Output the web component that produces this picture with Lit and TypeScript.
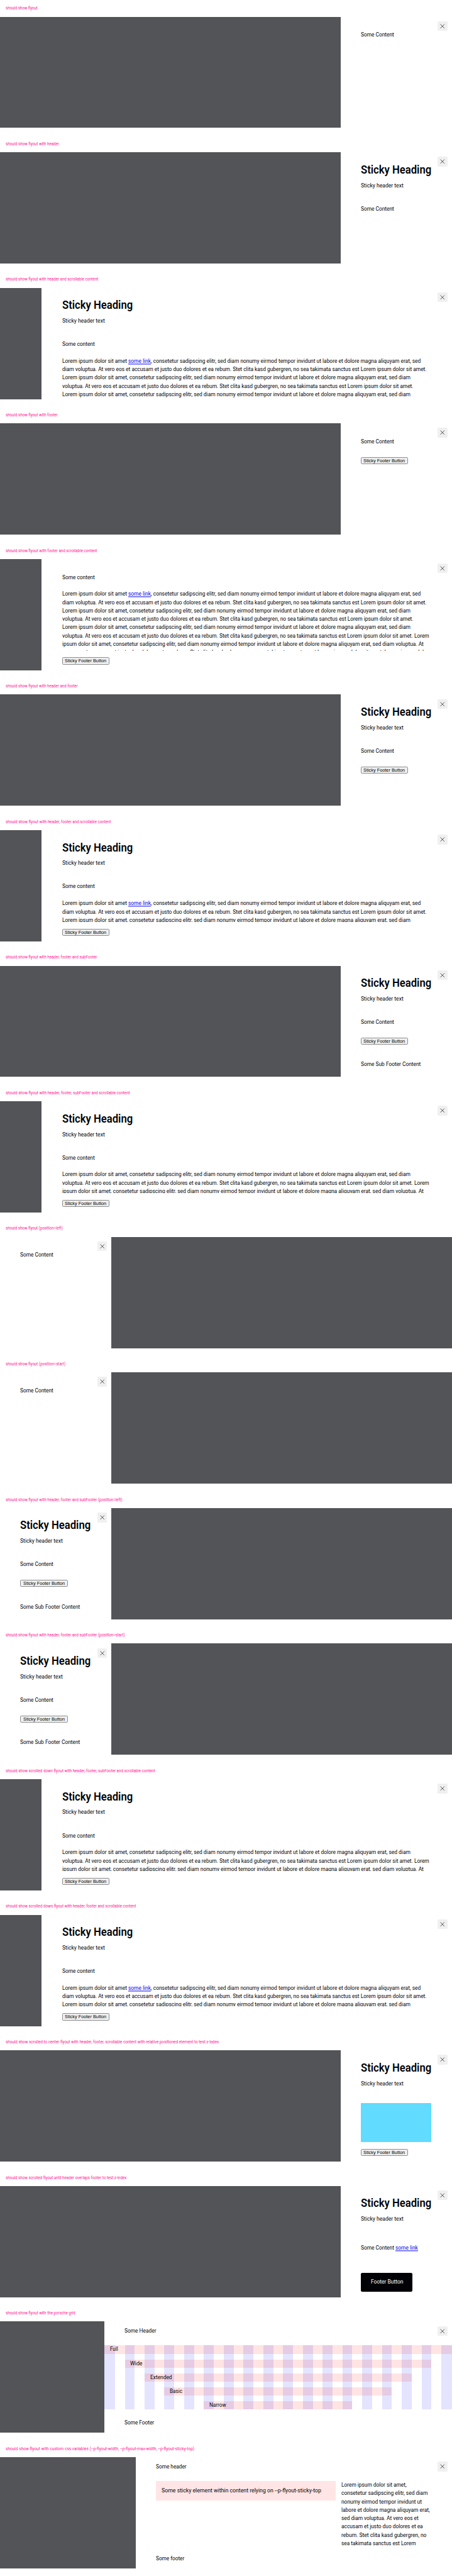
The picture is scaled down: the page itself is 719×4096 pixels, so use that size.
import { LitElement, html, css, svg, type TemplateResult } from "lit";
import { customElement, property } from "lit/decorators.js";

/* One design pixel, in CSS pixels. */
const UNIT = 0.55277;

/* A single line of text, condensed horizontally to a given width in design pixels. */
@customElement("fit-line")
class FitLine extends LitElement {
  @property({ type: Number }) w = 0;

  static styles = css`
    :host { display: block; width: 0; white-space: nowrap; }
    .text { display: inline-block; transform-origin: 0 50%; }
  `;

  render() {
    return html`<span class="text"><slot></slot></span>`;
  }

  firstUpdated() {
    this.fit();
    requestAnimationFrame(() => this.fit());
  }

  private fit() {
    const el = this.renderRoot.querySelector(".text") as HTMLElement;
    el.style.transform = "none";
    const natural = el.getBoundingClientRect().width;
    if (natural > 0 && this.w > 0) {
      el.style.transform = `translateY(0.4px) scaleX(${(this.w * UNIT) / natural})`;
    }
  }
}

type Line = [TemplateResult | string, number];

const LOREM = "consetetur sadipscing elitr, sed diam nonumy eirmod tempor invidunt ut labore et dolore magna aliquyam erat, sed";
const VERO = "vero eos et accusam et justo duo dolores et ea rebum. Stet clita kasd gubergren, no sea takimata sanctus est Lorem ipsum dolor sit amet.";

const lineLink: Line = [html`Lorem ipsum dolor sit amet <a class="link">some link</a>, ${LOREM}`, 1031.5];
const lineDiam: Line = ["diam voluptua. At " + VERO, 1048.5];
const lineLorem: Line = ["Lorem ipsum dolor sit amet, " + LOREM + " diam", 1002];
const lineVoluptua: Line = ["voluptua. At " + VERO, 1010.5];
const lineVoluptuaLorem: Line = ["voluptua. At " + VERO + " Lorem", 1056];
const lineIpsum: Line = ["ipsum dolor sit amet, " + LOREM + " diam voluptua. At", 1040];
const lineVero: Line = [VERO + " Lorem ipsum dolor", 1054];

const linked = [lineLink, lineDiam, lineLorem, lineVoluptua, lineLorem, lineVoluptuaLorem, lineIpsum, lineVero];
const plain = [lineLorem, lineVoluptuaLorem, lineIpsum];

interface Story {
  title: string;
  titleWidth: number;
  layout: string;
  body: TemplateResult;
}

const closeButton = html`<button class="close" aria-label="Close">
  <svg class="icon" viewBox="0 0 28 28">${svg`<path d="M8.3 8.3 19.7 19.7M19.7 8.3 8.3 19.7" fill="none" stroke="#010205" stroke-width="1.2"/>`}</svg>
</button>`;

const header = html`<header class="header">
  <h2 class="heading"><fit-line w="203">Sticky Heading</fit-line></h2>
  <fit-line w="122.5">Sticky header text</fit-line>
</header>`;

const footer = html`<footer class="footer"><button class="native"><fit-line class="caption" w="119.7">Sticky Footer Button</fit-line></button></footer>`;

const content = html`<div class="content"><fit-line w="95.5">Some Content</fit-line></div>`;

const subFooter = html`<div class="sub"><fit-line w="172.5">Some Sub Footer Content</fit-line></div>`;

const scroll = (lines: Line[]) => html`<div class="content scroll">
  <fit-line w="93.5">Some content</fit-line>
  <div class="para">${lines.map(([t, w]) => html`<fit-line .w=${w}>${t}</fit-line>`)}</div>
</div>`;

const bars: [string, string, number][] = [
  ["full", "Full", 23],
  ["wide", "Wide", 35.3],
  ["extended", "Extended", 62.5],
  ["basic", "Basic", 36.3],
  ["narrow", "Narrow", 48.3],
];

const gridContent = html`<div class="grid">
  ${Array.from({ length: 18 }, (_, i) => html`<i class="col" style="grid-column:${i + 1}"></i>`)}
  ${bars.map(([cls, name, w]) => html`<div class="bar ${cls}"><fit-line .w=${w}>${name}</fit-line></div>`)}
</div>`;

const column: Line[] = [
  ["Lorem ipsum dolor sit amet,", 187.5],
  ["consetetur sadipscing elitr, sed diam", 248.5],
  ["nonumy eirmod tempor invidunt ut", 231.5],
  ["labore et dolore magna aliquyam erat,", 254.5],
  ["sed diam voluptua. At vero eos et", 222],
  ["accusam et justo duo dolores et ea", 234.5],
  ["rebum. Stet clita kasd gubergren, no", 245],
  ["sea takimata sanctus est Lorem", 214.5],
];

const full = html`${header}${content}${footer}${subFooter}`;

const stories: Story[] = [
  { title: "should show flyout", titleWidth: 92, layout: "end", body: content },
  { title: "should show flyout with header", titleWidth: 153.5, layout: "end", body: html`${header}${content}` },
  { title: "should show flyout with header and scrollable content", titleWidth: 266.5, layout: "broad", body: html`${header}${scroll(linked.slice(0, 5))}` },
  { title: "should show flyout with footer", titleWidth: 149.5, layout: "end", body: html`${content}${footer}` },
  { title: "should show flyout with footer and scrollable content", titleWidth: 263, layout: "broad", body: html`${scroll(linked)}${footer}` },
  { title: "should show flyout with header and footer", titleWidth: 207.5, layout: "end", body: html`${header}${content}${footer}` },
  { title: "should show flyout with header, footer and scrollable content", titleWidth: 303, layout: "broad", body: html`${header}${scroll(linked.slice(0, 3))}${footer}` },
  { title: "should show flyout with header, footer and subFooter", titleWidth: 263, layout: "end", body: full },
  { title: "should show flyout with header, footer, subFooter and scrollable content", titleWidth: 357.5, layout: "broad", body: html`${header}${scroll(plain)}${footer}` },
  { title: "should show flyout (position=left)", titleWidth: 164.5, layout: "start", body: content },
  { title: "should show flyout (position=start)", titleWidth: 172, layout: "start", body: content },
  { title: "should show flyout with header, footer and subFooter (position=left)", titleWidth: 336, layout: "start", body: full },
  { title: "should show flyout with header, footer and subFooter (position=start)", titleWidth: 343, layout: "start", body: full },
  { title: "should show scrolled down flyout with header, footer, subFooter and scrollable content", titleWidth: 430, layout: "broad", body: html`${header}${scroll(plain)}${footer}` },
  { title: "should show scrolled down flyout with header, footer and scrollable content", titleWidth: 375.5, layout: "broad", body: html`${header}${scroll(linked.slice(0, 3))}${footer}` },
  {
    title: "should show scrolled to center flyout with header, footer, scrollable content with relative positioned element to test z-index",
    titleWidth: 613.5, layout: "end",
    body: html`${header}<div class="content scroll blue"></div>${footer}`,
  },
  {
    title: "should show scrolled flyout until header overlaps footer to test z-index",
    titleWidth: 348, layout: "end",
    body: html`${header}
      <div class="content shifted"><fit-line w="164.3">Some Content <a class="link">some link</a></fit-line></div>
      <footer class="footer push"><button class="solid"><fit-line w="93">Footer Button</fit-line></button></footer>`,
  },
  {
    title: "should show flyout with the porsche grid", titleWidth: 200.5, layout: "gridded",
    body: html`<header class="slim"><fit-line w="91.3">Some Header</fit-line></header>
      ${gridContent}
      <footer class="line-footer"><fit-line w="85.3">Some Footer</fit-line></footer>`,
  },
  {
    title: "should show flyout with custom css variables (--p-flyout-width, --p-flyout-max-width, --p-flyout-sticky-top)",
    titleWidth: 543, layout: "custom",
    body: html`<header class="slim"><fit-line w="88">Some header</fit-line></header>
      <div class="split">
        <div class="sticky"><fit-line w="459.5">Some sticky element within content relying on --p-flyout-sticky-top</fit-line></div>
        <div>${column.map(([t, w]) => html`<fit-line .w=${w}>${t}</fit-line>`)}</div>
      </div>
      <footer class="line-footer"><fit-line w="81.8">Some footer</fit-line></footer>`,
  },
];

@customElement("app-root")
class AppRoot extends LitElement {
  static styles = css`
    :host {
      --u: 0.55277px;
      display: block;
      width: 719px;
      height: 4096px;
      overflow: hidden;
      background: #fff;
      color: #010205;
      font: 400 calc(16 * var(--u)) / calc(24 * var(--u)) Roboto, "Liberation Sans", sans-serif;
    }
    * { box-sizing: border-box; margin: 0; }
    .story { height: calc(390 * var(--u)); }
    .title {
      height: calc(48 * var(--u));
      padding: calc(13.2 * var(--u)) 0 0 calc(16 * var(--u));
      font-size: calc(12 * var(--u));
      font-weight: 400;
      color: #ff1493;
    }
    .stage { display: flex; height: calc(320 * var(--u)); background: #535457; justify-content: flex-end; }
    .stage.start { justify-content: flex-start; }
    .panel {
      position: relative;
      display: flex;
      flex-direction: column;
      height: 100%;
      background: #fff;
      overflow: hidden;
      padding: calc(41 * var(--u)) calc(59 * var(--u)) 0 calc(58.5 * var(--u));
    }
    .panel:has(.header) { padding-top: calc(30 * var(--u)); }
    .end .panel, .start .panel { width: calc(320.7 * var(--u)); }
    .broad .panel { width: calc(1180.7 * var(--u)); }
    .gridded .panel { width: calc(1000.7 * var(--u)); padding: calc(16 * var(--u)) 0 0; }
    .custom .panel { width: calc(910.7 * var(--u)); padding-top: calc(16 * var(--u)); }
    .close {
      position: absolute;
      top: calc(13 * var(--u));
      right: calc(13 * var(--u));
      width: calc(28 * var(--u));
      height: calc(28 * var(--u));
      padding: 0;
      border: 0;
      border-radius: calc(3 * var(--u));
      background: #f0f0f1;
    }
    .icon { display: block; width: 100%; height: 100%; }
    .header { flex: none; height: calc(121 * var(--u)); }
    .heading {
      height: calc(54 * var(--u));
      font-size: calc(33 * var(--u));
      line-height: calc(40 * var(--u));
      font-weight: 600;
    }
    .content { flex: none; }
    .scroll { flex: 1 1 0; min-height: 0; overflow: hidden; }
    .para { padding-top: calc(24.5 * var(--u)); }
    .link { color: #0000ee; text-decoration: underline; text-decoration-thickness: calc(1 * var(--u)); }
    .footer { flex: none; padding-top: calc(31.5 * var(--u)); }
    .scroll + .footer { padding: calc(19.8 * var(--u)) 0 calc(16 * var(--u)); }
    .native {
      display: block;
      width: calc(136 * var(--u));
      height: calc(20.7 * var(--u));
      padding: 0 0 0 calc(6.2 * var(--u));
      border: 1px solid #8c8c8c;
      border-radius: calc(3 * var(--u));
      background: #efefef;
      color: #000;
      text-align: left;
      font: calc(13.33 * var(--u)) / calc(17 * var(--u)) "Liberation Sans", Arial, sans-serif;
    }
    .sub { padding-top: calc(45.5 * var(--u)); }
    .blue { background: #61dbff; }
    .shifted { padding-top: calc(16 * var(--u)); }
    .push { padding-top: calc(59 * var(--u)); }
    .solid {
      display: block;
      width: calc(149 * var(--u));
      height: calc(54 * var(--u));
      padding: 0 0 0 calc(28.3 * var(--u));
      border: 0;
      border-radius: calc(4 * var(--u));
      background: #010205;
      color: #fff;
      text-align: left;
      font: inherit;
    }
    .slim { flex: none; height: calc(53 * var(--u)); }
    .gridded .slim, .gridded .line-footer { padding-left: calc(59 * var(--u)); }
    .grid {
      display: grid;
      flex: none;
      grid-template-columns: calc(30.8 * var(--u)) repeat(16, 1fr) calc(30.8 * var(--u));
      grid-template-rows: repeat(5, calc(24 * var(--u)));
      gap: calc(16 * var(--u)) calc(28.3 * var(--u));
    }
    .col { grid-row: 1 / -1; background: rgba(0, 0, 255, 0.105); }
    .bar { padding-left: calc(16 * var(--u)); background: rgba(255, 0, 0, 0.105); }
    .full { grid-area: 1 / 1 / 2 / -1; }
    .wide { grid-area: 2 / 2 / 3 / -2; }
    .extended { grid-area: 3 / 3 / 4 / -3; }
    .basic { grid-area: 4 / 4 / 5 / -4; }
    .narrow { grid-area: 5 / 6 / 6 / -6; }
    .line-footer { padding-top: calc(27 * var(--u)); }
    .split {
      display: grid;
      flex: none;
      grid-template-columns: calc(517 * var(--u)) 1fr;
      column-gap: calc(16.5 * var(--u));
      align-items: start;
      height: calc(184 * var(--u));
    }
    .sticky { padding: calc(16 * var(--u)); background: #ffe5e5; }
  `;

  render() {
    return html`<main>
      ${stories.map(
        (s) => html`<section class="story">
          <h1 class="title"><fit-line .w=${s.titleWidth}>${s.title}</fit-line></h1>
          <div class="stage ${s.layout}"><div class="panel">${s.body}${closeButton}</div></div>
        </section>`
      )}
    </main>`;
  }
}
